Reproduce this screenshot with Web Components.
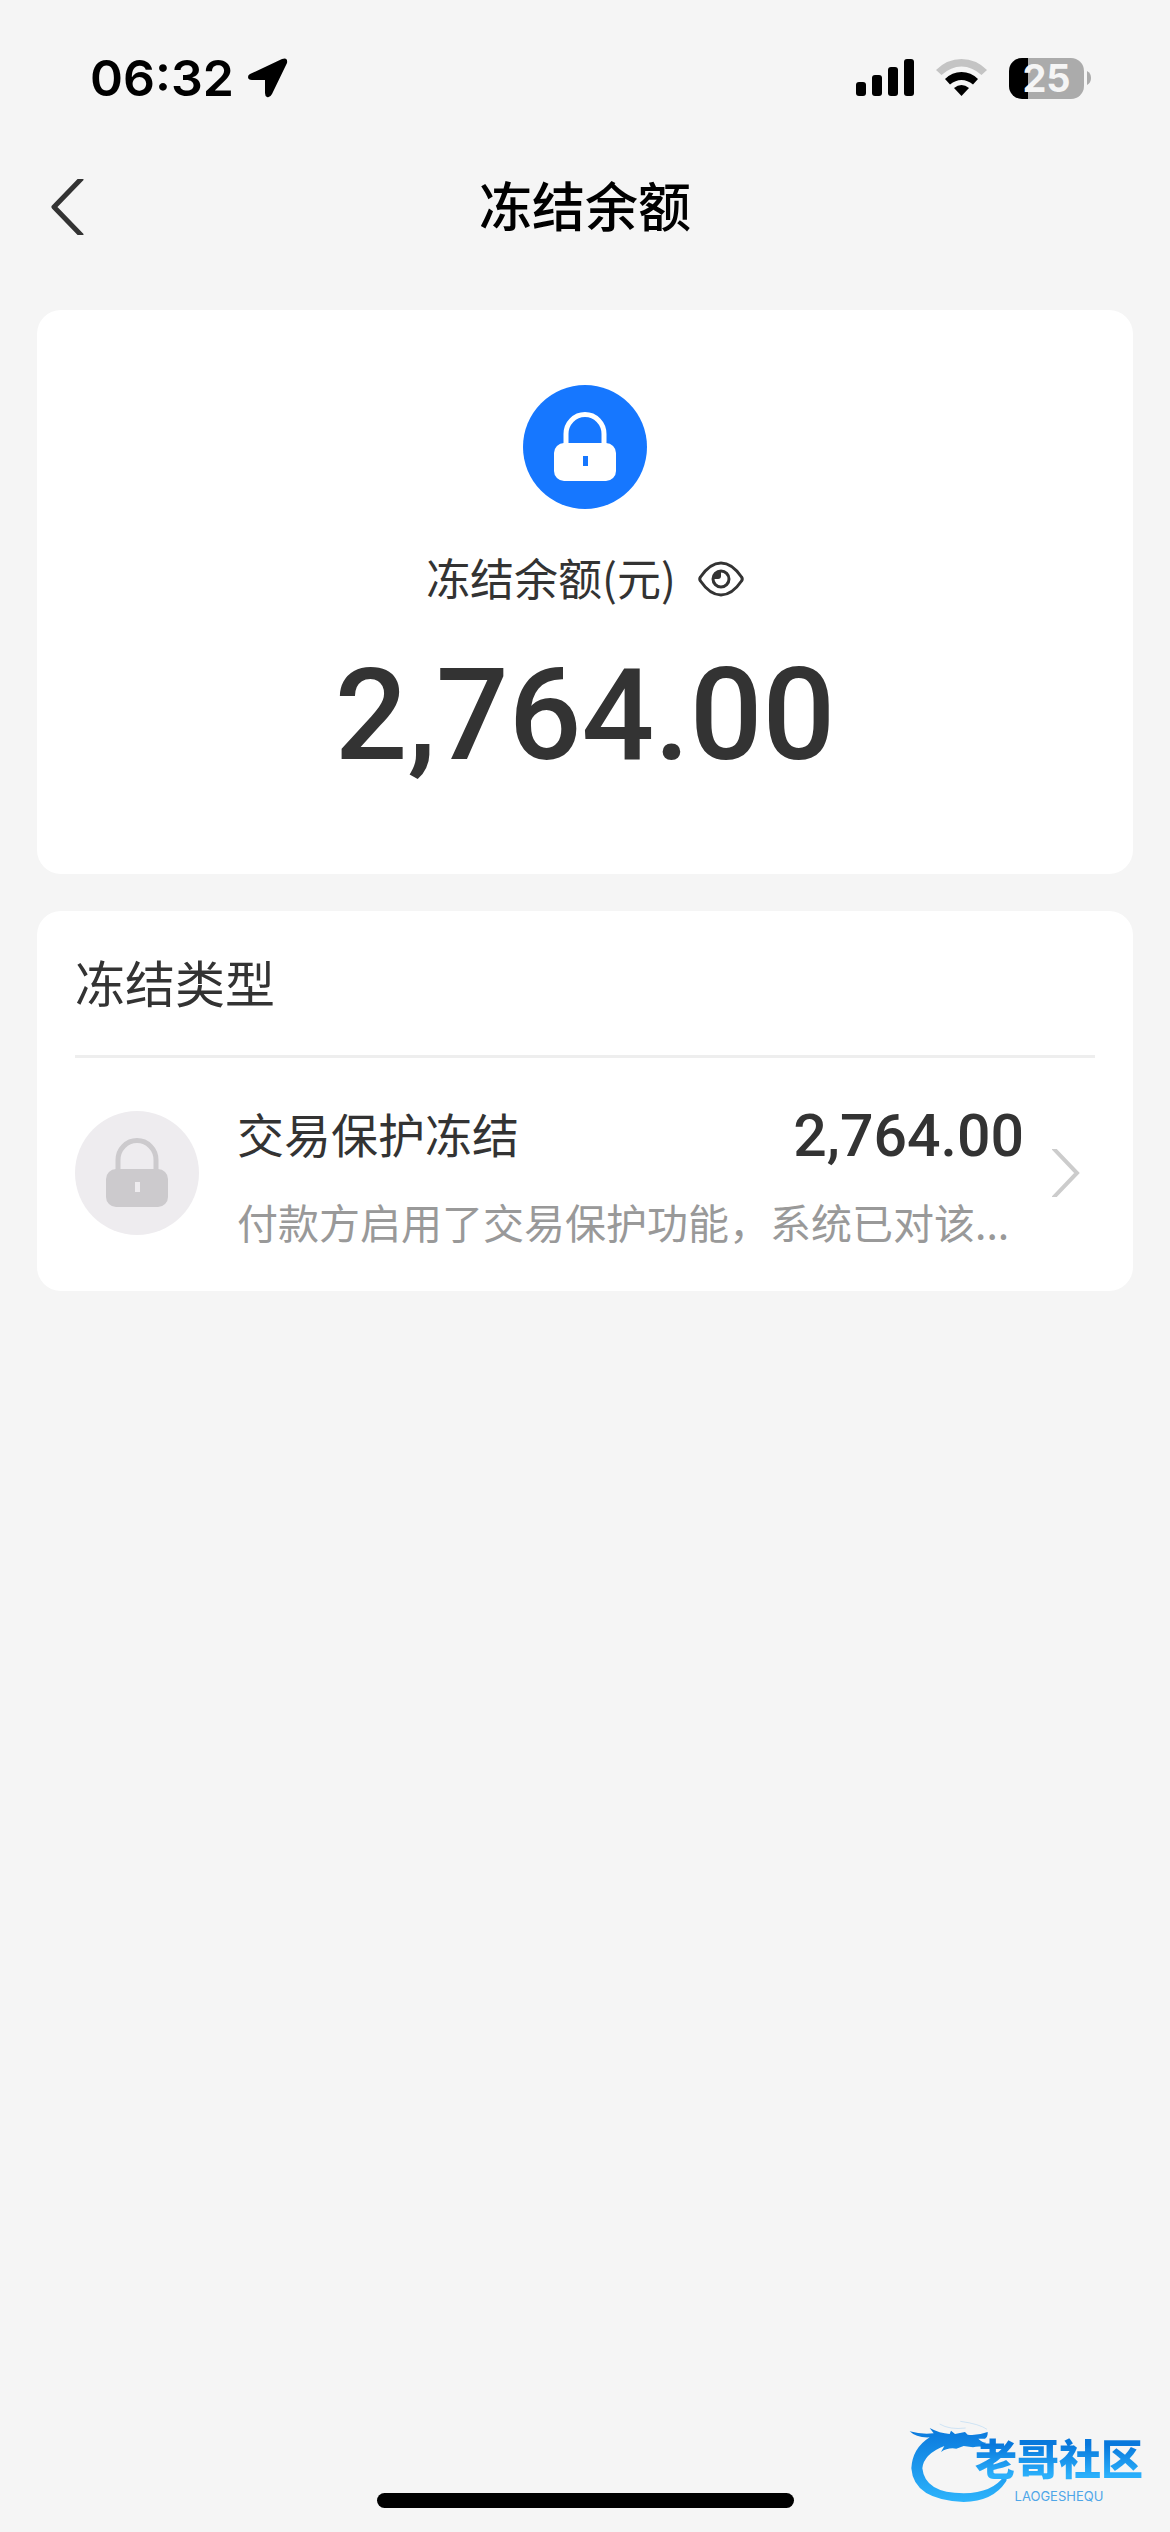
<!DOCTYPE html>
<html lang="zh-CN">
<head>
<meta charset="utf-8">
<meta name="viewport" content="width=device-width, initial-scale=1">
<title>冻结余额</title>
<style>
  body {
    margin: 0;
    background: #f5f5f5;
    color: #333;
    font-family: "Noto Sans CJK SC", sans-serif;
  }
</style>
</head>
<body>
<balance-page>
  <status-bar slot="top" time="06:32" battery="25"></status-bar>
  <nav-bar slot="top">冻结余额</nav-bar>

  <balance-card amount="2,764.00">冻结余额(元)</balance-card>
  <freeze-list>
    <span slot="title">冻结类型</span>
    <freeze-item amount="2,764.00">
      交易保护冻结
      <span slot="note">付款方启用了交易保护功能，系统已对该...</span>
    </freeze-item>
  </freeze-list>

  <home-indicator slot="bottom"></home-indicator>
  <site-mark slot="bottom"></site-mark>
</balance-page>

<script>
// small helper, every element renders its template once
class BaseElement extends HTMLElement {
  constructor() {
    super();
    this.attachShadow({ mode: 'open' });
    const t = document.createElement('template');
    t.innerHTML = this.template();
    this.shadowRoot.appendChild(t.content.cloneNode(true));
  }
  attributeChangedCallback(attrName, oldValue, newValue) {
    this.shadowRoot.getElementById(attrName).textContent = newValue;
  }
}

class BalancePage extends BaseElement {
  template() {
    return `
      <style>
        :host {
          display: flex;
          flex-direction: column;
          min-height: 100vh;
          position: relative;
        }
        main {
          display: flex;
          flex-direction: column;
          flex: 1;
          gap: 37px;
          padding: 37px;
        }
      </style>
      <slot name="top"></slot>
      <main><slot></slot></main>
      <slot name="bottom"></slot>
    `;
  }
}

class StatusBar extends BaseElement {
  static get observedAttributes() {
    return ['time', 'battery'];
  }
  template() {
    return `
      <style>
        :host {
          display: flex;
          align-items: center;
          justify-content: space-between;
          box-sizing: border-box;
          height: 141px;
          padding: 15px 79px 0 90px;
          color: #000;
          font-family: Inter, sans-serif;
        }
        .side {
          display: flex;
          align-items: center;
        }
        .left { gap: 14px; }
        .right { gap: 22px; }
        #time {
          font-size: 50px;
          font-weight: 600;
          line-height: 60px;
        }
        svg { display: block; }
        .battery {
          display: flex;
          align-items: center;
          gap: 3px;
        }
        #battery {
          width: 75px;
          border-radius: 13px;
          background: linear-gradient(to right, #000 25%, #ababab 25%);
          color: #f5f5f5;
          font-size: 38px;
          font-weight: 700;
          line-height: 41px;
          text-align: center;
        }
      </style>
      <div class="side left">
        <span id="time"></span>
        <svg width="40" height="40" viewBox="0 0 40 40">
          <path d="M2 16 L34 1 Q40 -1 39 5 L24 36 Q22 40 19 39 Q17 38 17 35 V22 H4 Q0 22 0 19 Q0 17 2 16 Z"/>
        </svg>
      </div>
      <div class="side right">
        <svg width="58" height="38" viewBox="0 0 58 38">
          <rect x="0" y="23" width="10" height="14" rx="3"/>
          <rect x="16" y="16" width="10" height="21" rx="3"/>
          <rect x="32" y="8" width="10" height="29" rx="3"/>
          <rect x="48" y="0" width="10" height="37" rx="3"/>
        </svg>
        <svg width="51" height="38" viewBox="0 0 51 38">
          <path fill="#c4c4c4" d="M0 11 Q11 0 25.500 0 Q40 0 51 11 L45.500 16 Q36 7.500 25.500 7.500 Q15 7.500 5.500 16 Z"/>
          <path d="M9 20 Q16 13 25.500 13 Q35 13 42 20 L37 25.500 Q31.500 21 25.500 21 Q19.500 21 14 25.500 Z"/>
          <path d="M18 29 Q25.500 23 33 29 L25.500 37 Z"/>
        </svg>
        <div class="battery">
          <span id="battery"></span>
          <svg width="4" height="14" viewBox="0 0 4 14"><path fill="#ababab" d="M0 0 Q4 2 4 7 Q4 12 0 14 Z"/></svg>
        </div>
      </div>
    `;
  }
}

class NavBar extends BaseElement {
  template() {
    return `
      <style>
        :host {
          display: grid;
          grid-template-columns: 1fr auto 1fr;
          align-items: center;
          height: 132px;
          padding: 0 30px;
        }
        button {
          justify-self: start;
          padding: 20px;
          border: 0;
          background: none;
          cursor: pointer;
        }
        svg { display: block; }
        h1 {
          margin: 0;
          padding-bottom: 6px;
          color: #000;
          font-size: 53px;
          font-weight: 500;
          line-height: 72px;
        }
      </style>
      <button type="button" aria-label="返回">
        <svg width="34" height="56" viewBox="0 0 34 56" fill="none" stroke="#333" stroke-width="5"><path d="M32 -1 L4 28 L32 57" stroke-linejoin="round"/></svg>
      </button>
      <h1><slot></slot></h1>
    `;
  }
}

// round badge with a padlock, coloured through --disc, --lock and --hole
class LockBadge extends BaseElement {
  template() {
    return `
      <style>
        :host {
          display: block;
          flex: none;
        }
        svg { display: block; }
        .disc { fill: var(--disc, #1677ff); }
        .hole { fill: var(--hole, #1677ff); }
        .body { fill: var(--lock, #fff); }
        .shackle {
          fill: none;
          stroke: var(--lock, #fff);
          stroke-width: 5;
        }
      </style>
      <svg width="124" height="124" viewBox="0 0 124 124">
        <circle class="disc" cx="62" cy="62" r="62"/>
        <path class="shackle" d="M43 60 V49 A19 19.500 0 0 1 81 49 V60"/>
        <rect class="body" x="31" y="58" width="62" height="38" rx="10"/>
        <rect class="hole" x="60" y="71" width="5" height="10"/>
      </svg>
    `;
  }
}

class BalanceCard extends BaseElement {
  static get observedAttributes() {
    return ['amount'];
  }
  template() {
    return `
      <style>
        :host {
          display: flex;
          flex-direction: column;
          align-items: center;
          gap: 40px;
          padding: 75px 38px 93px;
          border-radius: 24px;
          background: #fff;
        }
        .label {
          display: flex;
          align-items: center;
          gap: 22px;
          font-size: 44px;
          line-height: 56px;
        }
        .label span { padding-bottom: 4px; }
        button {
          padding: 0;
          border: 0;
          background: none;
          cursor: pointer;
        }
        svg { display: block; }
        #amount {
          font-family: Roboto, sans-serif;
          font-size: 128px;
          font-weight: 500;
          line-height: 132px;
        }
      </style>
      <lock-badge></lock-badge>
      <div class="label">
        <span><slot></slot></span>
        <button type="button" aria-label="隐藏金额">
          <svg width="46" height="36" viewBox="0 0 46 36" fill="none" stroke="#333" stroke-width="3">
            <path d="M2.500 16 Q12 2 23 2 Q34 2 43.500 16 Q45 18 43.500 20 Q34 34 23 34 Q12 34 2.500 20 Q1 18 2.500 16 Z"/>
            <circle cx="23" cy="18" r="8"/>
            <path fill="#333" stroke="none" d="M23 10 V15 Q23 18 20 18 H15 Q15 10 23 10 Z"/>
          </svg>
        </button>
      </div>
      <div id="amount"></div>
    `;
  }
}

class FreezeList extends BaseElement {
  template() {
    return `
      <style>
        :host {
          display: block;
          padding: 0 38px;
          border-radius: 24px;
          background: #fff;
        }
        h2 {
          margin: 0;
          padding-bottom: 4px;
          border-bottom: 3px solid #eee;
          font-size: 50px;
          font-weight: 400;
          line-height: 140px;
        }
      </style>
      <h2><slot name="title"></slot></h2>
      <slot></slot>
    `;
  }
}

class FreezeItem extends BaseElement {
  static get observedAttributes() {
    return ['amount'];
  }
  template() {
    return `
      <style>
        :host { display: block; }
        a {
          display: flex;
          align-items: center;
          box-sizing: border-box;
          min-height: 233px;
          padding: 0 15px 4px 0;
          color: inherit;
          text-decoration: none;
        }
        lock-badge {
          --disc: #eeecef;
          --hole: #eeecef;
          --lock: #cccacd;
          margin-right: 38px;
        }
        .text {
          display: flex;
          flex: 1;
          flex-direction: column;
          gap: 24px;
          min-width: 0;
        }
        .line {
          display: flex;
          align-items: center;
          justify-content: space-between;
          font-size: 47px;
          line-height: 72px;
        }
        #amount {
          padding-top: 6px;
          font-family: Roboto, sans-serif;
          font-size: 59px;
          font-weight: 500;
          line-height: 66px;
        }
        .note {
          overflow: hidden;
          color: #999;
          font-size: 41px;
          line-height: 56px;
          white-space: nowrap;
        }
        svg {
          display: block;
          margin-left: 28px;
        }
      </style>
      <a href="#detail">
        <lock-badge></lock-badge>
        <div class="text">
          <div class="line">
            <span><slot></slot></span>
            <span id="amount"></span>
          </div>
          <div class="note"><slot name="note"></slot></div>
        </div>
        <svg width="28" height="48" viewBox="0 0 28 48" fill="none" stroke="#ccc" stroke-width="4"><path d="M1 -1 L25 24 L1 49"/></svg>
      </a>
    `;
  }
}

class HomeIndicator extends BaseElement {
  template() {
    return `
      <style>
        :host {
          display: flex;
          justify-content: center;
          padding-bottom: 24px;
        }
        div {
          width: 417px;
          height: 15px;
          border-radius: 8px;
          background: #000;
        }
      </style>
      <div></div>
    `;
  }
}

// community logo, floats over the bottom right corner
class SiteMark extends BaseElement {
  template() {
    return `
      <style>
        :host {
          display: flex;
          align-items: flex-start;
          position: absolute;
          right: 20px;
          bottom: 28px;
        }
        svg {
          display: block;
          margin-right: -40px;
        }
        .name {
          display: flex;
          flex-direction: column;
          align-items: center;
          min-width: 182px;
          padding-top: 6px;
        }
        b {
          background: linear-gradient(#0878dc 30%, #2bb0fb 80%);
          background-clip: text;
          -webkit-background-clip: text;
          color: transparent;
          font-size: 42px;
          font-weight: 900;
          line-height: 62px;
        }
        small {
          color: #4fa6e8;
          font-family: Inter, sans-serif;
          font-size: 13px;
          line-height: 16px;
        }
      </style>
      <svg width="100" height="84" viewBox="55 30 300 252">
        <defs>
          <linearGradient id="g" x1="0" y1="0" x2="0" y2="1">
            <stop offset="0" stop-color="#0a78dc"/>
            <stop offset="1" stop-color="#2db4fc"/>
          </linearGradient>
        </defs>
        <path fill="url(#g)" d="M60 64 Q95 74 132 70 L120 54 Q150 70 180 72 L184 62 L196 72 L226 66 L234 74 Q265 77 294 66 Q295 80 286 86 L266 86 Q278 98 289 98 L280 110 Q262 108 250 112 L222 108 L200 116 Q174 112 154 126 L164 108 Q102 132 98 175 Q106 250 222 250 Q310 248 343 198 Q356 205 348 216 Q310 274 222 276 Q72 270 65 175 Q68 115 120 82 Q80 84 60 64 Z"/>
        <path fill="none" stroke="#b9d9f3" stroke-width="2" d="M150 42 Q180 60 228 54 M212 34 Q270 42 292 58"/>
      </svg>
      <div class="name">
        <b>老哥社区</b>
        <small>LAOGESHEQU</small>
      </div>
    `;
  }
}

window.customElements.define('lock-badge', LockBadge);
window.customElements.define('balance-page', BalancePage);
window.customElements.define('status-bar', StatusBar);
window.customElements.define('nav-bar', NavBar);
window.customElements.define('balance-card', BalanceCard);
window.customElements.define('freeze-list', FreezeList);
window.customElements.define('freeze-item', FreezeItem);
window.customElements.define('home-indicator', HomeIndicator);
window.customElements.define('site-mark', SiteMark);
</script>
</body>
</html>
